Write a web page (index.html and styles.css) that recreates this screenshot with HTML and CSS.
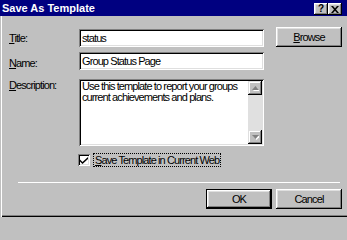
FILE: index.html
```html
<!DOCTYPE html>
<html>
<head>
<meta charset="utf-8">
<title>Save As Template</title>
<link rel="stylesheet" href="styles.css">
</head>
<body>
<div class="window">
  <div class="titlebar">
    <span class="title">Save As Template</span>
    <div class="caption-btns">
      <span class="cbtn help">?</span>
      <span class="cbtn close"><svg width="8" height="7" viewBox="0 0 8 7"><path d="M0 0h2l2 2.2 2-2.2h2l-3 3.5 3 3.5h-2l-2-2.2-2 2.2h-2l3-3.5z" fill="#000"/></svg></span>
    </div>
  </div>
  <div class="content">
    <div class="row row-title">
      <div class="lbl lbl-mid"><u>T</u>itle:</div>
      <div class="field">status</div>
      <button class="btn browse"><u>B</u>rowse</button>
    </div>
    <div class="row row-name">
      <div class="lbl lbl-mid"><u>N</u>ame:</div>
      <div class="field">Group Status Page</div>
    </div>
    <div class="row row-desc">
      <div class="lbl lbl-top"><u>D</u>escription:</div>
      <div class="textarea">
        <div class="ta-text">Use this template to report your groups<br>current achievements and plans.</div>
        <div class="scrollbar">
          <span class="sbtn"><svg width="7" height="5" viewBox="0 0 7 5"><polygon points="4.5,1 8,5 1,5" fill="#fff"/><polygon points="3.5,0 7,4 0,4" fill="#808080"/></svg></span>
          <span class="track"></span>
          <span class="sbtn"><svg width="7" height="5" viewBox="0 0 7 5"><polygon points="1,1 8,1 4.5,5" fill="#fff"/><polygon points="0,0 7,0 3.5,4" fill="#808080"/></svg></span>
        </div>
      </div>
    </div>
    <div class="row row-check">
      <span class="checkbox"><svg width="8" height="7" viewBox="0 0 8 7"><path d="M0 2.5l2.5 2.5 5.5-5v2l-5.5 5-2.5-2.5z" fill="#000"/></svg></span>
      <span class="check-label"><u>S</u>ave Template in Current Web</span>
    </div>
    <div class="separator"></div>
    <div class="actions">
      <button class="btn default">OK</button>
      <button class="btn">Cancel</button>
    </div>
  </div>
</div>
</body>
</html>
```
FILE: styles.css
```css
* { box-sizing: border-box; }
html, body { margin: 0; padding: 0; }
body {
  background: #c0c0c0;
  font-family: "Liberation Sans", Arial, sans-serif;
  font-size: 11px;
  letter-spacing: -0.9px;
  color: #000;
}
.window {
  width: 347px;
  height: 217px;
  background: #c0c0c0;
  display: flex;
  flex-direction: column;
  overflow: hidden;
  box-shadow: inset 1px 0 0 #c0c0c0, inset 2px 0 0 #fff, inset 0 -1px 0 #000, inset 0 -2px 0 #808080;
}
.titlebar {
  height: 16px;
  flex: none;
  background: #000080;
  display: flex;
  align-items: flex-start;
  justify-content: space-between;
  padding: 0 5px 0 2px;
}
.title {
  color: #fff;
  font-weight: bold;
  letter-spacing: 0;
  line-height: 16px;
}
.caption-btns {
  display: flex;
  margin-top: 3px;
}
.cbtn {
  width: 14px;
  height: 12px;
  background: #c0c0c0;
  display: flex;
  align-items: center;
  justify-content: center;
  font-weight: bold;
  font-size: 10px;
  letter-spacing: 0;
  line-height: 12px;
  box-shadow: inset -1px -1px 0 #000, inset 1px 1px 0 #fff, inset -2px -2px 0 #808080, inset 2px 2px 0 #dfdfdf;
}
.content {
  flex: 1;
  display: flex;
  flex-direction: column;
  padding: 11px 0 0 9px;
}
.row {
  display: flex;
  align-items: flex-start;
}
.lbl {
  width: 70px;
  flex: none;
}
.lbl-mid {
  margin-top: 2px;
  line-height: 18px;
}
.row-title { height: 20px; }
.row-title .field { margin-top: 2px; }
.row-name { margin-top: 5px; }
.row-desc { margin-top: 7px; }
.lbl-top {
  margin-top: 1px;
  line-height: 11px;
}
.field {
  width: 185px;
  height: 18px;
  background: #fff;
  padding: 2px 3px;
  line-height: 14px;
  white-space: nowrap;
  box-shadow: inset 1px 1px 0 #808080, inset -1px -1px 0 #fff, inset 2px 2px 0 #000, inset -2px -2px 0 #dfdfdf;
}
.btn {
  width: 66px;
  height: 20px;
  border: 0;
  padding: 0;
  margin: 0;
  background: #c0c0c0;
  font: inherit;
  letter-spacing: inherit;
  color: #000;
  text-align: center;
  box-shadow: inset -1px -1px 0 #000, inset 1px 1px 0 #fff, inset -2px -2px 0 #808080, inset 2px 2px 0 #dfdfdf;
}
.browse { margin-left: 12px; }
.btn.default {
  border: 1px solid #000;
}
.textarea {
  width: 185px;
  height: 67px;
  background: #fff;
  padding: 2px;
  display: flex;
  box-shadow: inset 1px 1px 0 #808080, inset -1px -1px 0 #fff, inset 2px 2px 0 #000, inset -2px -2px 0 #dfdfdf;
}
.ta-text {
  flex: 1;
  padding: 0 0 0 1px;
  line-height: 11px;
  white-space: nowrap;
  overflow: hidden;
}
.scrollbar {
  width: 14px;
  display: flex;
  flex-direction: column;
  background: #e0e0e0;
}
.sbtn {
  height: 14px;
  flex: none;
  background: #c0c0c0;
  display: flex;
  align-items: center;
  justify-content: center;
  box-shadow: inset -1px -1px 0 #000, inset 1px 1px 0 #dfdfdf, inset -2px -2px 0 #808080, inset 2px 2px 0 #fff;
}
.track { flex: 1; }
.row-check {
  margin-top: 7px;
  padding-left: 69px;
  align-items: flex-start;
}
.checkbox {
  width: 12px;
  height: 12px;
  margin-top: 1px;
  background: #fff;
  display: flex;
  align-items: center;
  justify-content: center;
  box-shadow: inset 1px 1px 0 #808080, inset -1px -1px 0 #fff, inset 2px 2px 0 #000, inset -2px -2px 0 #dfdfdf;
}
.check-label {
  margin-left: 3px;
  padding: 0 1px;
  line-height: 12px;
  border: 1px dotted #000;
  white-space: nowrap;
}
.separator {
  margin: 15px 0 0 9px;
  width: 322px;
  height: 1px;
  background: #fff;
}
.actions {
  display: flex;
  justify-content: flex-end;
  gap: 4px;
  margin-top: 6px;
  padding-right: 5px;
}
```
